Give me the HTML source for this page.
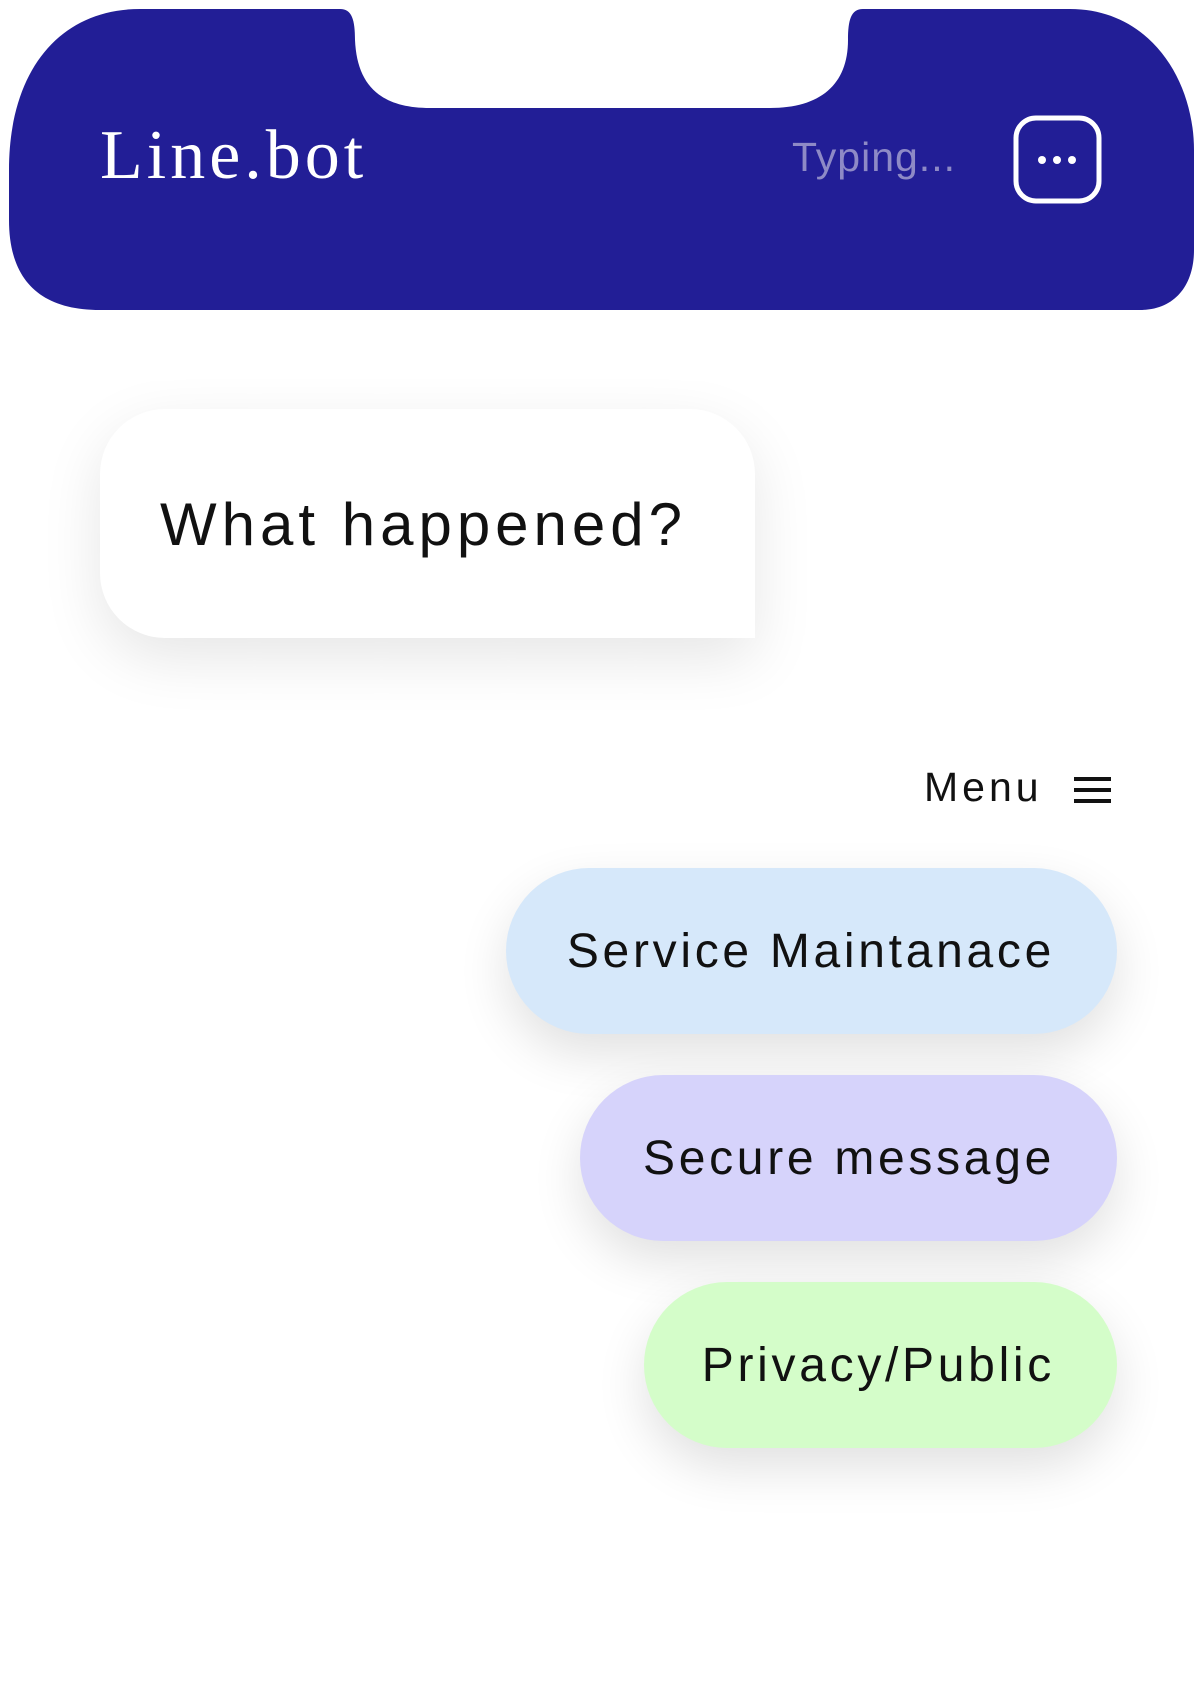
<!DOCTYPE html>
<html><head><meta charset="utf-8"><style>
body{margin:0;width:1194px;height:1701px;background:#fff;position:relative;overflow:hidden;font-family:"Liberation Sans",sans-serif}
.abs{position:absolute}
.pill{position:absolute;border-radius:83px;box-shadow:0 20px 50px rgba(0,0,0,0.12);display:flex;align-items:center;justify-content:flex-end;padding-right:62px;box-sizing:border-box;font-size:48px;letter-spacing:3.7px;color:#111}
</style></head><body>
<svg class="abs" style="left:0;top:0" width="1194" height="320">
<path fill="#221e96" d="M140 9 H340 C352 9 355 20 355 40 C357 85 380 108 430 108 H770 C820 108 848 85 848 40 C848 20 851 9 863 9 H1070 C1150 9 1194 80 1194 150 V250 C1194 285 1175 310 1140 310 H100 C40 310 9 280 9 220 V170 C9 70 60 9 140 9 Z"/>
<rect x="1016" y="118" width="83" height="83" rx="20" fill="none" stroke="#fff" stroke-width="5"/>
<circle cx="1042" cy="160" r="4" fill="#fff"/><circle cx="1057" cy="160" r="4" fill="#fff"/><circle cx="1072" cy="160" r="4" fill="#fff"/>
</svg>
<div class="abs" style="left:100px;top:116px;font-family:'Liberation Serif',serif;font-size:70px;letter-spacing:4px;color:#fff">Line.bot</div>
<div class="abs" style="left:792px;top:134px;font-size:41px;letter-spacing:1px;color:#8e8ac6">Typing...</div>
<div class="abs" style="left:100px;top:409px;width:655px;height:229px;background:#fff;border-radius:65px 65px 0 65px;box-shadow:0 20px 60px rgba(0,0,0,0.10)"></div>
<div class="abs" style="left:160px;top:490px;font-size:60px;letter-spacing:5px;color:#111">What happened?</div>
<div class="abs" style="left:924px;top:764px;font-size:41px;letter-spacing:4px;color:#111">Menu</div>
<div class="abs" style="left:1074px;top:777px;width:37px;height:4px;background:#111;box-shadow:0 11px 0 #111,0 22px 0 #111"></div>
<div class="pill" style="left:506px;top:868px;width:611px;height:166px;background:#d6e8fa">Service Maintanace</div>
<div class="pill" style="left:580px;top:1075px;width:537px;height:166px;background:#d6d3fb">Secure message</div>
<div class="pill" style="left:644px;top:1282px;width:473px;height:166px;background:#d4fdc9">Privacy/Public</div>
</body></html>
